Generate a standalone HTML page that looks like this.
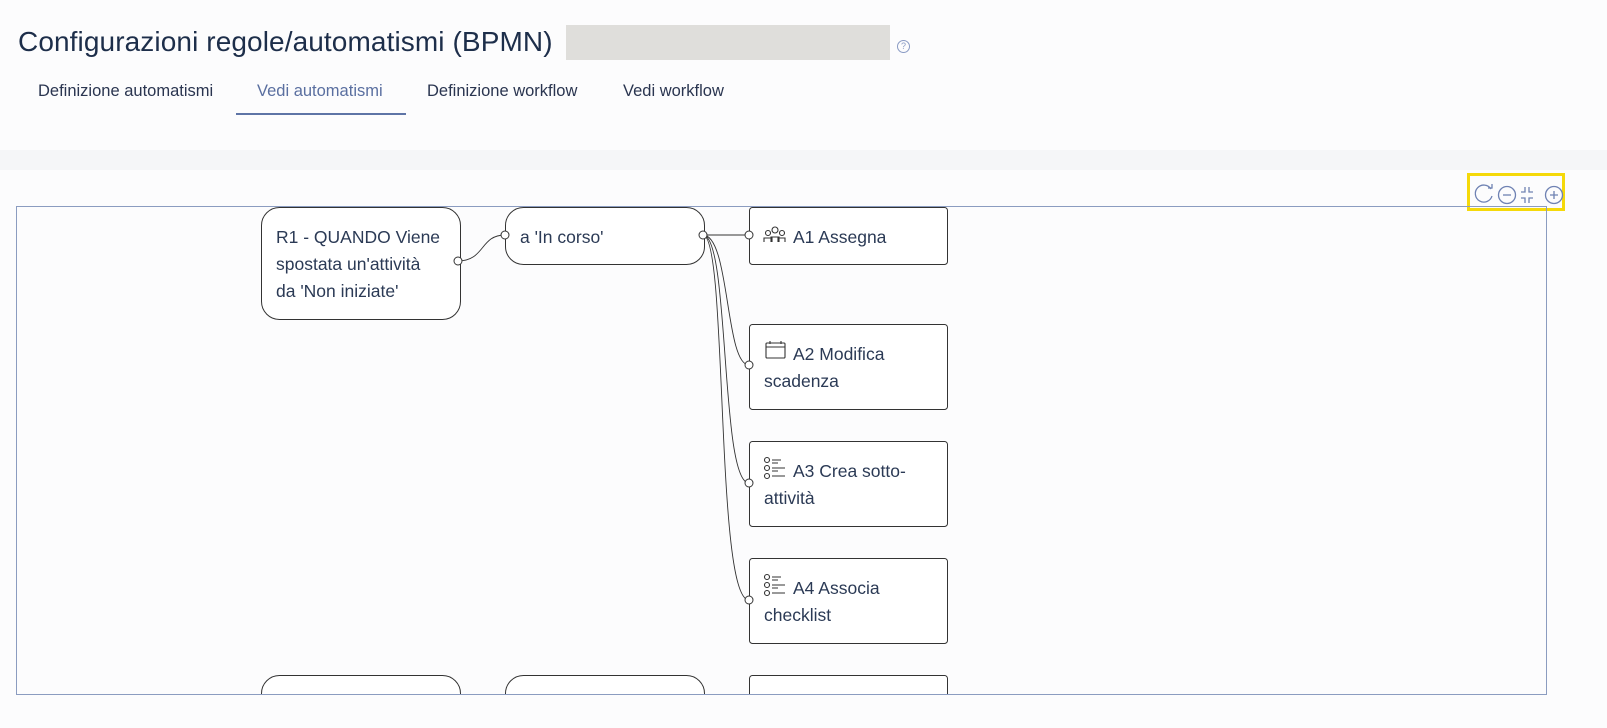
<!DOCTYPE html>
<html><head><meta charset="utf-8"><style>
body{margin:0;width:1607px;height:728px;background:#fcfcfd;font-family:"Liberation Sans",sans-serif;overflow:hidden;position:relative}
h1{position:absolute;left:18px;top:26px;margin:0;font-weight:400;font-size:28px;color:#1d2e4a;letter-spacing:0.1px;white-space:nowrap}
.grey{position:absolute;left:566px;top:25px;width:324px;height:35px;background:#dfdedb}
.help{position:absolute;left:897px;top:40px;width:11px;height:11px;border:1px solid #8a9bc4;border-radius:50%;font-size:9px;color:#8a9bc4;text-align:center;line-height:11px}
.tab{position:absolute;top:82px;font-size:16.5px;color:#2a3550;white-space:nowrap}
.stripe{position:absolute;left:0;top:150px;width:1607px;height:20px;background:#f5f6f8}
.hl{position:absolute;left:1467px;top:173px;width:98px;height:38px;border:3px solid #f5d90a;box-sizing:border-box}
</style></head><body>
<h1>Configurazioni regole/automatismi (BPMN)</h1>
<div class="grey"></div><div class="help">?</div>
<div class="tab" style="left:38px">Definizione automatismi</div>
<div class="tab" style="left:257px;color:#5a6fa0">Vedi automatismi</div>
<div style="position:absolute;left:236px;top:113px;width:170px;height:2px;background:#5e74a6"></div>
<div class="tab" style="left:427px">Definizione workflow</div>
<div class="tab" style="left:623px">Vedi workflow</div>
<div class="stripe"></div>
<div class="hl"></div>
<svg width="1607" height="728" style="position:absolute;left:0;top:0" font-family="Liberation Sans, sans-serif" font-size="17.5" fill="#2b3a55">
<g fill="none" stroke="#6f82b3" stroke-width="1.3">
<path d="M1491 189A8.5 8.5 0 1 0 1492 196"/><path d="M1488 188h4v-4"/>
<circle cx="1507" cy="195" r="8.5"/><path d="M1503 195h8"/>
<path d="M1525 187v5h-4M1529 187v5h4M1525 203v-5h-4M1529 203v-5h4"/>
<circle cx="1554" cy="195" r="8.5"/><path d="M1550 195h8M1554 191v8"/>
</g>
<defs><clipPath id="c"><rect x="16" y="206" width="1530" height="488"/></clipPath></defs>
<rect x="16.5" y="206.5" width="1530" height="488" fill="none" stroke="#8b9cc0"/>
<g clip-path="url(#c)" stroke="#333" fill="#fff">
<rect x="261.5" y="207.5" width="199" height="112" rx="18"/>
<rect x="505.5" y="207.5" width="199" height="57" rx="18"/>
<rect x="749.5" y="207.5" width="198" height="57" rx="3"/>
<rect x="749.5" y="324.5" width="198" height="85" rx="3"/>
<rect x="749.5" y="441.5" width="198" height="85" rx="3"/>
<rect x="749.5" y="558.5" width="198" height="85" rx="3"/>
<rect x="261.5" y="675.5" width="199" height="60" rx="18"/>
<rect x="505.5" y="675.5" width="199" height="60" rx="18"/>
<rect x="749.5" y="675.5" width="198" height="60" rx="3"/>
<g fill="none" stroke-width="0.9">
<path d="M458 261C485 261 480 235 505 235"/>
<path d="M703 235H749"/>
<path d="M703 235C730 235 725 365 749 365"/>
<path d="M703 235C730 235 720 483 749 483"/>
<path d="M703 235C728 235 715 600 749 600"/>
</g>
<circle cx="458" cy="261" r="4"/><circle cx="505" cy="235" r="4"/><circle cx="703" cy="235" r="4"/>
<circle cx="749" cy="235" r="4"/><circle cx="749" cy="365" r="4"/><circle cx="749" cy="483" r="4"/><circle cx="749" cy="600" r="4"/>
<g fill="none" stroke-width="1.1">
<rect x="766" y="343" width="19" height="15" rx="1"/><path d="M766 347h19M770 341v3M781 341v3"/>
<circle cx="767" cy="460" r="2.5"/><circle cx="767" cy="468" r="2.5"/><circle cx="767" cy="476" r="2.5"/><path d="M772 460h9M772 468h13M772 476h13M772 463h6M772 471h6"/>
<circle cx="767" cy="577" r="2.5"/><circle cx="767" cy="585" r="2.5"/><circle cx="767" cy="593" r="2.5"/><path d="M772 577h9M772 585h13M772 593h13M772 580h6M772 588h6"/>
<circle cx="768" cy="233" r="2.5"/><circle cx="775" cy="230" r="3"/><circle cx="782" cy="233" r="2.5"/><path d="M764 242v-4h8v4M771 242v-5h8v5M778 242v-4h7v4"/>
</g>
</g>
<g stroke="none">
<text x="276" y="243">R1 - QUANDO Viene</text>
<text x="276" y="270">spostata un'attività</text>
<text x="276" y="297">da 'Non iniziate'</text>
<text x="520" y="243">a 'In corso'</text>
<text x="793" y="243">A1 Assegna</text>
<text x="793" y="360">A2 Modifica</text>
<text x="764" y="387">scadenza</text>
<text x="793" y="477">A3 Crea sotto-</text>
<text x="764" y="504">attività</text>
<text x="793" y="594">A4 Associa</text>
<text x="764" y="621">checklist</text>
</g>
</svg>
</body></html>
